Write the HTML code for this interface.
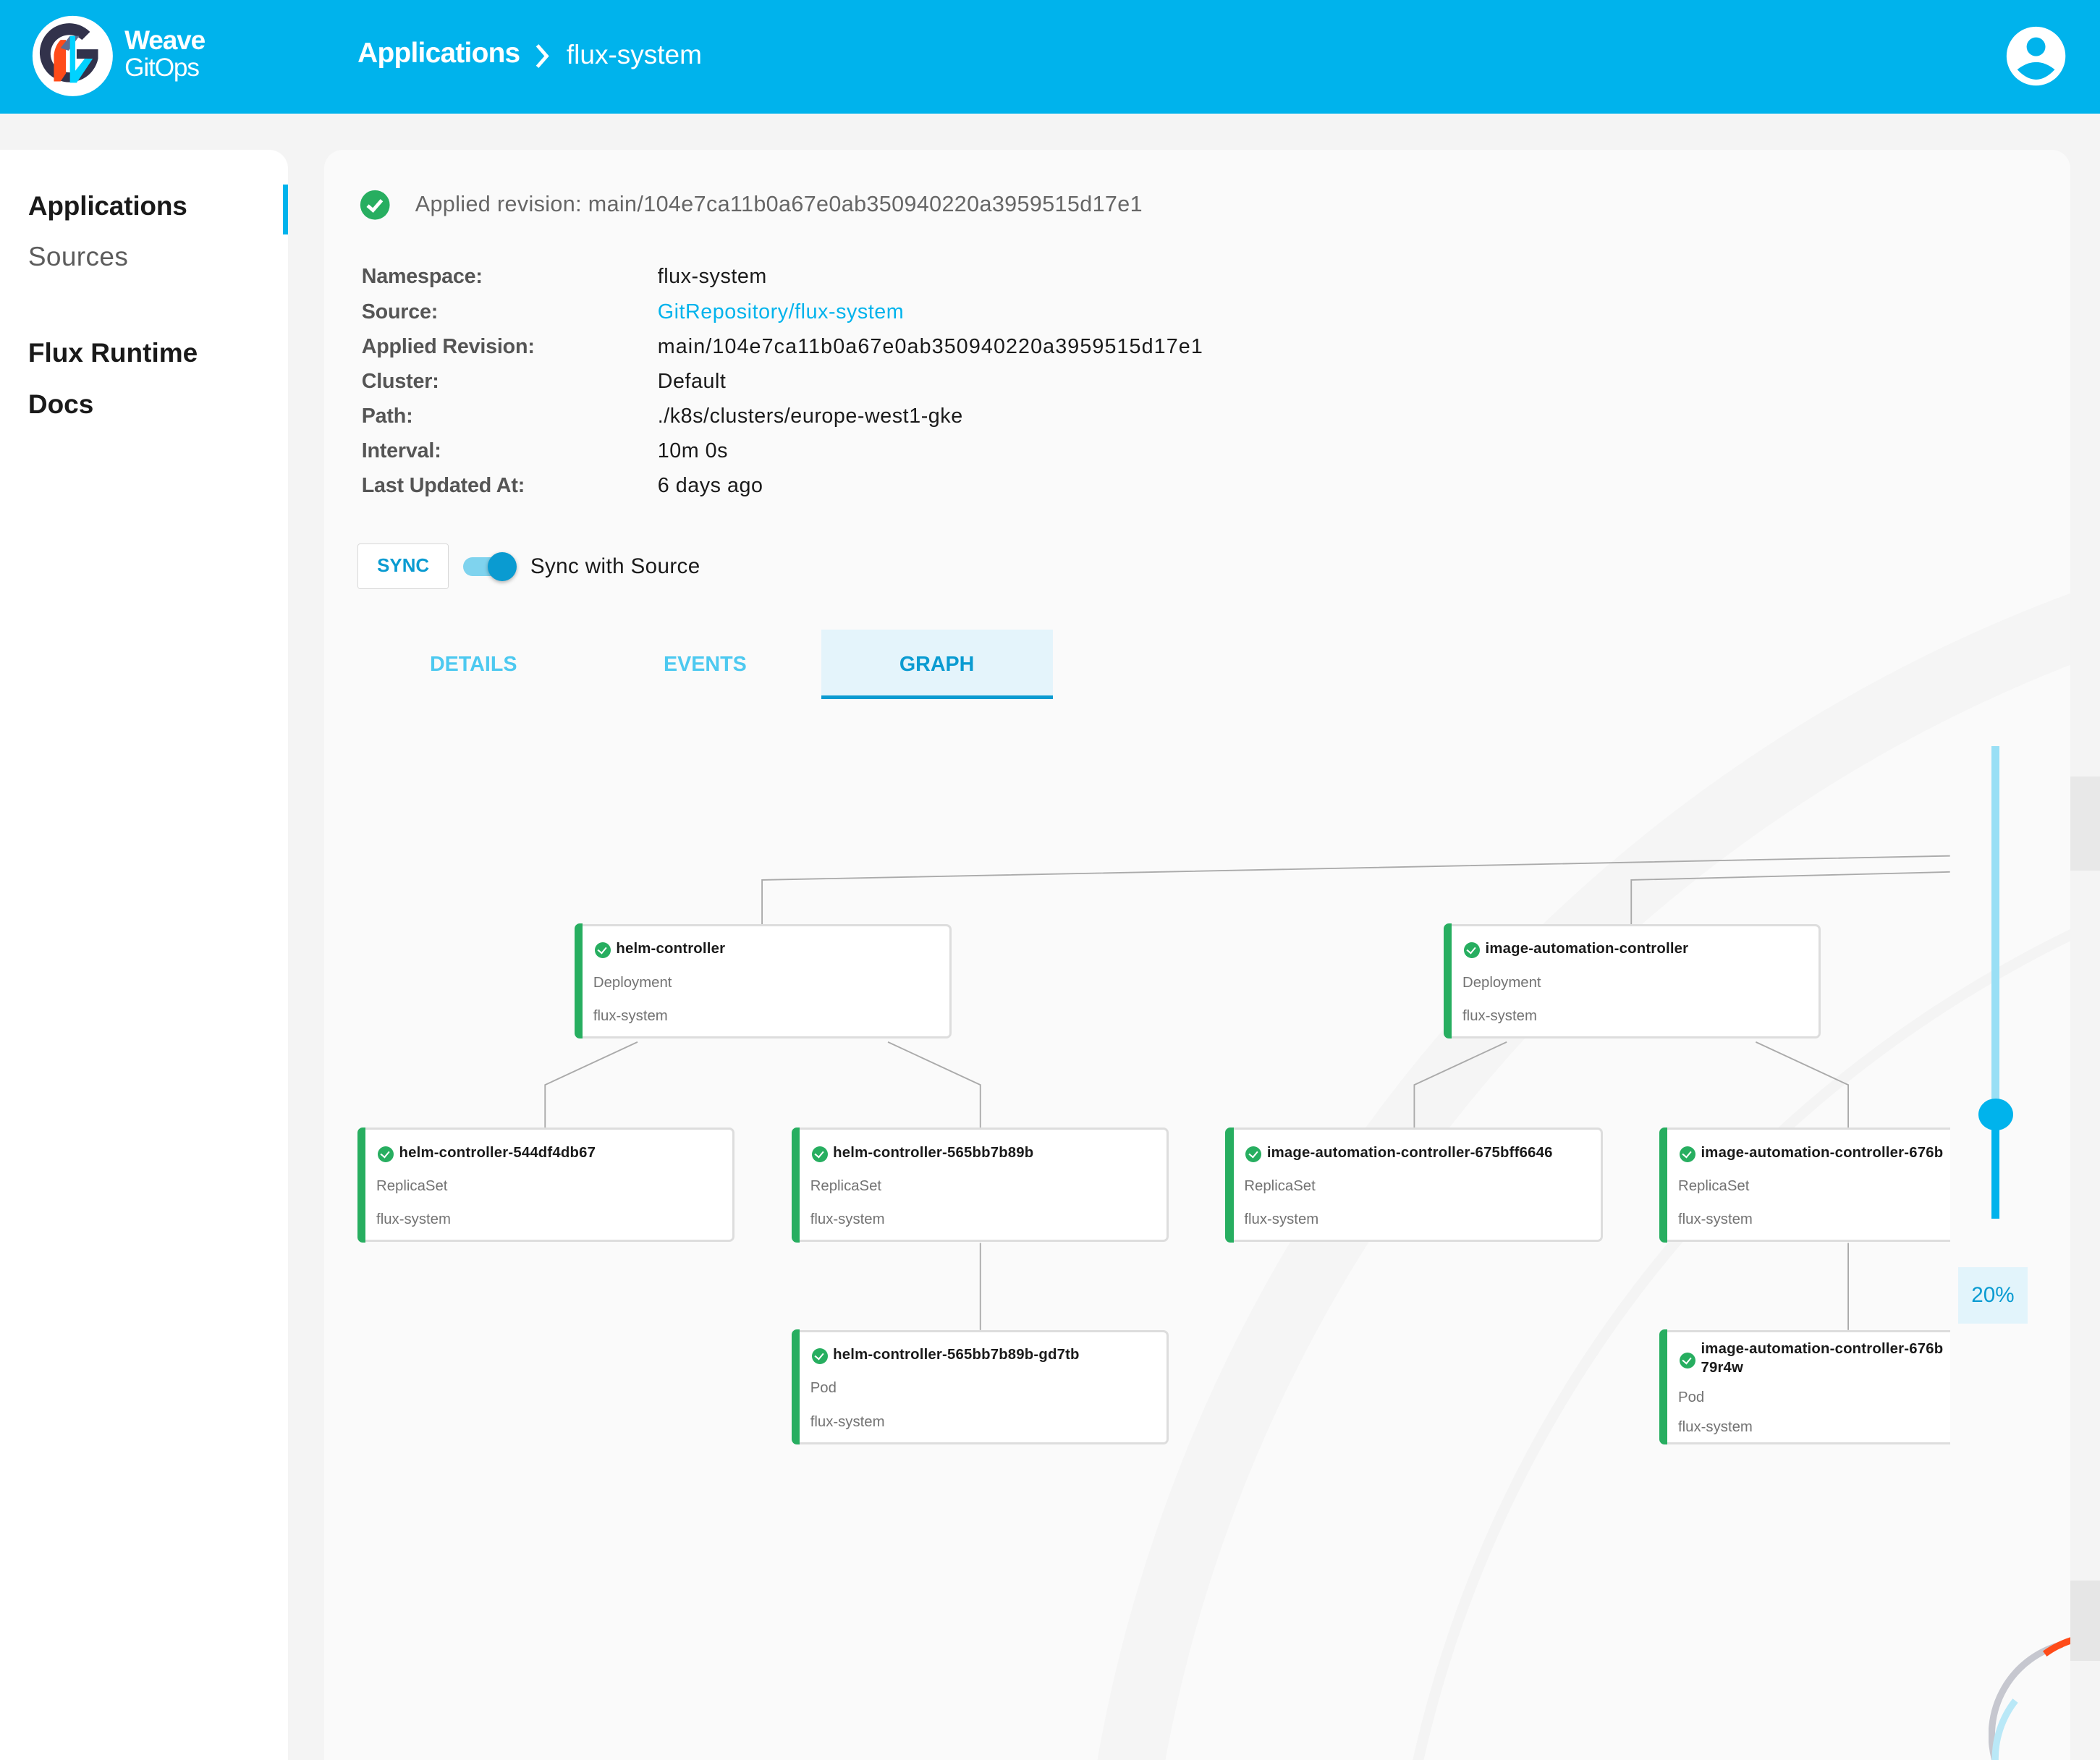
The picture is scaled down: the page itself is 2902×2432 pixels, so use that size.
<!DOCTYPE html>
<html><head><meta charset="utf-8"><style>
html,body{margin:0;padding:0;width:2902px;height:2432px;overflow:hidden;}
body{background:#f4f4f4;}
#r{zoom:1.85077;width:1568px;height:1314px;position:relative;overflow:hidden;font-family:"Liberation Sans",sans-serif;background:#f4f4f4;}
.abs{position:absolute;}
.hdr{left:0;top:0;width:1568px;height:85px;background:#00b3ec;}
.side{left:0;top:112px;width:215px;height:1202px;background:#fff;border-top-right-radius:14px;}
.main{left:242px;top:112px;width:1304px;height:1202px;background:#fafafa;border-top-left-radius:14px;border-top-right-radius:14px;overflow:hidden;}
.lbl{font-size:15.5px;color:#555;font-weight:bold;letter-spacing:-0.1px;}
.val{font-size:15.5px;color:#1a1a1a;letter-spacing:0.3px;}
.node{position:absolute;width:280px;height:82px;background:#fff;border:2px solid #ddd;border-left:none;border-radius:4px;box-sizing:content-box;}
.node:before{content:"";position:absolute;left:0;top:-2px;bottom:-2px;width:6px;background:#27ae60;border-radius:4px 0 0 4px;}
.node .t{position:absolute;left:31px;top:11px;font-size:11px;font-weight:bold;color:#1a1a1a;white-space:nowrap;letter-spacing:0.1px;}
.node .ck{position:absolute;left:15px;top:12px;width:12px;height:12px;border-radius:50%;background:#27ae60;}
.node .ck:after{content:"";position:absolute;left:3.5px;top:2.2px;width:3px;height:5px;border:solid #fff;border-width:0 1.6px 1.6px 0;transform:rotate(40deg);}
.node .s{position:absolute;left:14px;font-size:11px;color:#737373;white-space:nowrap;}
</style></head><body><div id="r">
<div class="abs hdr"></div>
<svg class="abs" style="left:23px;top:11px" width="62" height="62" viewBox="0 0 62 62">
<circle cx="31" cy="31" r="30" fill="#fff"/>
<path d="M44 13 A22 22 0 1 0 50 33 L50 26 L34 26 L34 33 L42 33 A14 14 0 1 1 38 19 Z" fill="#32324b"/>
<path d="M17 50 L17 30 Q18 23 22 19 L26 19 L26 44 L22 50 Z" fill="#ff4b19"/>
<path d="M22 25 L29 16 L36 16 L28 27 Z" fill="#5c6d93"/>
<path d="M29 16 L33 16 L33 42 L40 33 L46 33 L34 51 L29 51 Z" fill="#00d2ff"/>
</svg>
<div class="abs" style="left:93px;top:19px;color:#fff;font-size:20px;font-weight:bold;letter-spacing:-0.6px;line-height:22px">Weave</div>
<div class="abs" style="left:93px;top:40px;color:#fff;font-size:19px;letter-spacing:-0.6px;line-height:22px">GitOps</div>
<div class="abs" style="left:267px;top:28px;color:#fff;font-size:21px;font-weight:bold;letter-spacing:-0.4px">Applications</div>
<svg class="abs" style="left:398px;top:32px" width="14" height="20"><path d="M3 2 L10 10 L3 18" stroke="#fff" stroke-width="2.6" fill="none"/></svg>
<div class="abs" style="left:423px;top:29px;color:#fff;font-size:20px;letter-spacing:0px">flux-system</div>
<svg class="abs" style="left:1497px;top:19px" width="46" height="46" viewBox="0 0 46 46"><circle cx="23" cy="23" r="22" fill="#fff"/><circle cx="23" cy="16" r="7" fill="#00b3ec"/><path d="M9 33 Q23 22 37 33 Q23 48 9 33Z" fill="#00b3ec"/></svg>

<div class="abs side"></div>
<div class="abs" style="left:211px;top:138px;width:4px;height:37px;background:#00b3ec"></div>
<div class="abs" style="left:21px;top:142px;font-size:20px;font-weight:bold;color:#1a1a1a;letter-spacing:-0.1px">Applications</div>
<div class="abs" style="left:21px;top:180px;font-size:20px;color:#5c5c5c;letter-spacing:0.2px">Sources</div>
<div class="abs" style="left:21px;top:252px;font-size:20px;font-weight:bold;color:#1a1a1a;letter-spacing:0px">Flux Runtime</div>
<div class="abs" style="left:21px;top:290px;font-size:20px;font-weight:bold;color:#1a1a1a;letter-spacing:0px">Docs</div>

<div class="abs main">
<svg class="abs" style="left:0;top:0" width="1304" height="1202">
<circle cx="1700" cy="1400" r="1115" fill="none" stroke="#f5f5f5" stroke-width="50"/>
<circle cx="1700" cy="1400" r="905" fill="none" stroke="#f4f4f4" stroke-width="8"/>
</svg>
</div>
<svg class="abs" style="left:1485px;top:1210px" width="90" height="110"><path d="M5 105 A70 70 0 0 1 55 18" fill="none" stroke="#c6c7cf" stroke-width="5"/><path d="M5 105 A70 70 0 0 1 20 60" fill="none" stroke="#b9e8f7" stroke-width="5"/><path d="M42 25 A70 70 0 0 1 90 12" fill="none" stroke="#ff4b19" stroke-width="5"/></svg>
<div class="abs" style="left:1546px;top:580px;width:22px;height:70px;background:#e8e8e8"></div>
<div class="abs" style="left:1546px;top:1180px;width:22px;height:60px;background:#e6e6e6"></div>

<svg class="abs" style="left:268px;top:141px" width="24" height="24"><circle cx="12" cy="12" r="11" fill="#27ae60"/><path d="M6.5 12.5 L10.5 16 L17 8.5" stroke="#fff" stroke-width="2.6" fill="none"/></svg>
<div class="abs" style="left:310px;top:143px;font-size:16.5px;color:#666;letter-spacing:0.2px">Applied revision: main/104e7ca11b0a67e0ab350940220a3959515d17e1</div>

<div class="abs lbl" style="left:270px;top:198px">Namespace:</div><div class="abs val" style="left:491px;top:198px">flux-system</div>
<div class="abs lbl" style="left:270px;top:224px">Source:</div><div class="abs val" style="left:491px;top:224px;color:#00b3ec">GitRepository/flux-system</div>
<div class="abs lbl" style="left:270px;top:250px">Applied Revision:</div><div class="abs val" style="left:491px;top:250px;letter-spacing:0.6px">main/104e7ca11b0a67e0ab350940220a3959515d17e1</div>
<div class="abs lbl" style="left:270px;top:276px">Cluster:</div><div class="abs val" style="left:491px;top:276px">Default</div>
<div class="abs lbl" style="left:270px;top:302px">Path:</div><div class="abs val" style="left:491px;top:302px">./k8s/clusters/europe-west1-gke</div>
<div class="abs lbl" style="left:270px;top:328px">Interval:</div><div class="abs val" style="left:491px;top:328px">10m 0s</div>
<div class="abs lbl" style="left:270px;top:354px">Last Updated At:</div><div class="abs val" style="left:491px;top:354px">6 days ago</div>

<div class="abs" style="left:267px;top:406px;width:67px;height:33px;border:1px solid #d8d8d8;border-radius:2px;background:#fff;color:#0a9bd1;font-size:14px;font-weight:bold;text-align:center;line-height:33px">SYNC</div>
<div class="abs" style="left:346px;top:416px;width:36px;height:14px;border-radius:7px;background:#7fd3ee"></div>
<div class="abs" style="left:364px;top:412px;width:22px;height:22px;border-radius:50%;background:#0a9bd1;box-shadow:0 1px 3px rgba(0,0,0,.3)"></div>
<div class="abs" style="left:396px;top:414px;font-size:16px;color:#1a1a1a;letter-spacing:0.2px">Sync with Source</div>

<div class="abs" style="left:267px;top:470px;width:173px;height:52px;line-height:52px;text-align:center;font-size:15.5px;font-weight:bold;color:#4dc9f0">DETAILS</div>
<div class="abs" style="left:440px;top:470px;width:173px;height:52px;line-height:52px;text-align:center;font-size:15.5px;font-weight:bold;color:#4dc9f0">EVENTS</div>
<div class="abs" style="left:613px;top:470px;width:173px;height:49px;line-height:52px;text-align:center;font-size:15.5px;font-weight:bold;color:#0a9bd1;background:#e4f4fb;border-bottom:3px solid #0a9bd1">GRAPH</div>

<svg class="abs" style="left:0;top:0" width="1568" height="1314">
<g stroke="#aaa" stroke-width="1" fill="none">
<path d="M569 690 L569 657 L1456 639"/>
<path d="M1218 690 L1218 657 L1456 651"/>
<path d="M476 778 L407 810 L407 842"/>
<path d="M663 778 L732 810 L732 842"/>
<path d="M1125 778 L1056 810 L1056 842"/>
<path d="M1311 778 L1380 810 L1380 842"/>
<path d="M732 928 L732 993"/>
<path d="M1380 928 L1380 993"/>
</g></svg>

<div class="node" style="left:429px;top:690px"><i class="ck"></i><span class="t">helm-controller</span><span class="s" style="top:36px">Deployment</span><span class="s" style="top:61px">flux-system</span></div>
<div class="node" style="left:1078px;top:690px"><i class="ck"></i><span class="t">image-automation-controller</span><span class="s" style="top:36px">Deployment</span><span class="s" style="top:61px">flux-system</span></div>
<div class="node" style="left:267px;top:842px"><i class="ck"></i><span class="t">helm-controller-544df4db67</span><span class="s" style="top:36px">ReplicaSet</span><span class="s" style="top:61px">flux-system</span></div>
<div class="node" style="left:591px;top:842px"><i class="ck"></i><span class="t">helm-controller-565bb7b89b</span><span class="s" style="top:36px">ReplicaSet</span><span class="s" style="top:61px">flux-system</span></div>
<div class="node" style="left:915px;top:842px"><i class="ck"></i><span class="t">image-automation-controller-675bff6646</span><span class="s" style="top:36px">ReplicaSet</span><span class="s" style="top:61px">flux-system</span></div>
<div class="node" style="left:591px;top:993px"><i class="ck"></i><span class="t">helm-controller-565bb7b89b-gd7tb</span><span class="s" style="top:36px">Pod</span><span class="s" style="top:61px">flux-system</span></div>
<div class="abs" style="left:1239px;top:800px;width:217px;height:300px;overflow:hidden">
<div class="node" style="left:0;top:42px"><i class="ck"></i><span class="t">image-automation-controller-676b</span><span class="s" style="top:36px">ReplicaSet</span><span class="s" style="top:61px">flux-system</span></div>
<div class="node" style="left:0;top:193px"><i class="ck" style="top:15px"></i><span class="t" style="top:6px;line-height:14px">image-automation-controller-676b<br>79r4w</span><span class="s" style="top:43px">Pod</span><span class="s" style="top:65px">flux-system</span></div>
</div>

<div class="abs" style="left:1487px;top:557px;width:6px;height:275px;background:#99dff5"></div>
<div class="abs" style="left:1487px;top:832px;width:6px;height:78px;background:#00b3ec"></div>
<div class="abs" style="left:1477px;top:820px;width:26px;height:24px;border-radius:50%;background:#00b3ec"></div>
<div class="abs" style="left:1462px;top:946px;width:52px;height:42px;background:#e2f4fb;color:#0a9bd1;font-size:16px;text-align:center;line-height:42px">20%</div>
</div></body></html>
